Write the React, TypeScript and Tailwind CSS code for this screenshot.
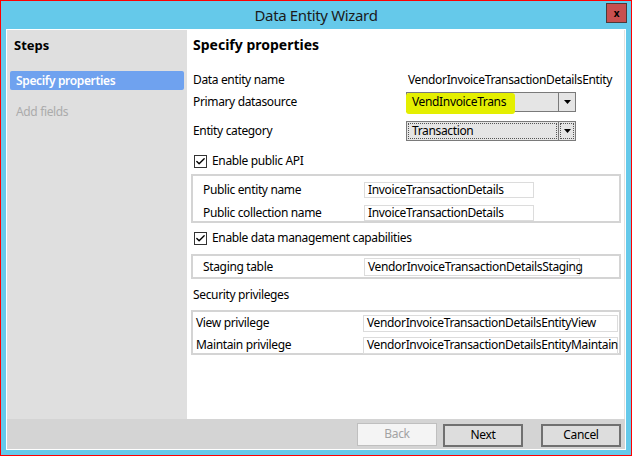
import { Check } from "lucide-react";

const font = { fontFamily: "'Noto Sans', 'Liberation Sans', sans-serif" };

function Combo({ value, focused, highlight }: { value: string; focused?: boolean; highlight?: boolean }) {
  return (
    <div className="relative flex h-[20px] w-[170px] border border-[#7a7a7a] bg-[#e5e5e5]">
      <div className="relative flex flex-1 items-center">
        {highlight && (
          <span className="absolute left-[-1px] top-[0px] h-[21px] w-[109px] rounded-[3px] bg-[#e4ef00]" />
        )}
        {focused && (
          <span className="absolute inset-[1px] border border-dotted border-[#555]" />
        )}
        <span className="relative pl-[5px] text-[12px] leading-none text-black">{value}</span>
      </div>
      <div className="relative flex w-[17px] items-center justify-center border-l border-[#7a7a7a]">
        {focused && <span className="absolute inset-[1px] border border-dotted border-[#555]" />}
        <svg width="7" height="4" viewBox="0 0 7 4" className="relative">
          <path d="M0 0h7L3.5 4z" fill="#000" />
        </svg>
      </div>
    </div>
  );
}

function CheckRow({ label }: { label: string }) {
  return (
    <div className="flex h-[18px] items-center gap-[5px] pl-[7px]">
      <span className="flex h-[13px] w-[13px] items-center justify-center border border-[#333] bg-white">
        <Check size={11} strokeWidth={3} className="text-black" />
      </span>
      <span className="text-[12px] text-black">{label}</span>
    </div>
  );
}

function Field({ value, w, h }: { value: string; w: string; h: string }) {
  return (
    <div className={`flex items-center border border-[#dcdcdc] bg-white pl-[3px] text-[12px] text-black ${w} ${h}`}>
      {value}
    </div>
  );
}

function Btn({ label, disabled }: { label: string; disabled?: boolean }) {
  return (
    <button
      className={
        disabled
          ? "h-[23px] w-[80px] border border-[#bfbfbf] bg-[#f4f4f4] text-[12px] text-[#a3a3a3]"
          : "h-[23px] w-[80px] border-2 border-[#707070] bg-[#dddddd] text-[12px] text-black"
      }
    >
      {label}
    </button>
  );
}

export default function App() {
  return (
    <div style={font} className="h-[456px] w-[632px] border border-[#ff0000] bg-[#65c9ea] tracking-[-0.35px]">
      <div className="relative flex h-[28px] items-center justify-center">
        <span className="text-[15px] text-[#1b1b1b]">Data Entity Wizard</span>
        <div className="absolute right-[4px] top-[2px] flex h-[20px] w-[21px] items-center justify-center border border-[#4d3a3a] bg-[#c75050]">
          <span className="text-[10px] font-bold leading-none text-black">x</span>
        </div>
      </div>

      <div className="ml-[5px] flex h-[421px] w-[620px] flex-col border border-white">
        <div className="flex h-[389px]">
          <aside className="w-[180px] bg-[#dfdfdf] px-[3px]">
            <p className="mt-[6px] pl-[4px] text-[13px] font-bold leading-[18px] tracking-normal text-black">Steps</p>
            <div className="mt-[17px] flex h-[19px] items-center rounded-[2px] bg-[#6fa2ef] pl-[6px] text-[12px] font-semibold text-white">
              Specify properties
            </div>
            <p className="mt-[14px] pl-[6px] text-[12px] leading-[16px] text-[#ababab]">Add fields</p>
          </aside>

          <section className="flex-1 border-r border-[#e2e2e2] bg-white text-[12px] text-black">
            <h1 className="mt-[6px] h-[18px] pl-[6px] text-[14px] font-bold leading-[18px] tracking-normal">Specify properties</h1>

            <div className="mt-[16px] flex h-[20px] items-center pl-[6px]">
              <span className="w-[215px]">Data entity name</span>
              <span>VendorInvoiceTransactionDetailsEntity</span>
            </div>
            <div className="mt-[2px] flex h-[20px] items-center pl-[6px]">
              <span className="w-[213px]">Primary datasource</span>
              <Combo value="VendInvoiceTrans" highlight />
            </div>
            <div className="mt-[9px] flex h-[20px] items-center pl-[6px]">
              <span className="w-[213px]">Entity category</span>
              <Combo value="Transaction" focused />
            </div>

            <div className="mt-[11px]">
              <CheckRow label="Enable public API" />
            </div>
            <div className="ml-[4px] mt-[4px] flex h-[49px] w-[430px] flex-col gap-[5px] border-2 border-[#d4d4d4] pl-[10px] pt-[5px]">
              <div className="flex items-center">
                <span className="w-[161px]">Public entity name</span>
                <Field value="InvoiceTransactionDetails" w="w-[170px]" h="h-[16px]" />
              </div>
              <div className="flex items-center">
                <span className="w-[161px]">Public collection name</span>
                <Field value="InvoiceTransactionDetails" w="w-[170px]" h="h-[16px]" />
              </div>
            </div>

            <div className="mt-[6px]">
              <CheckRow label="Enable data management capabilities" />
            </div>
            <div className="ml-[4px] mt-[7px] flex h-[25px] w-[430px] items-center border-2 border-[#d4d4d4] pl-[10px]">
              <span className="w-[161px]">Staging table</span>
              <Field value="VendorInvoiceTransactionDetailsStaging" w="w-[216px]" h="h-[18px]" />
            </div>

            <p className="mt-[7px] flex h-[18px] items-center pl-[6px]">Security privileges</p>
            <div className="ml-[4px] mt-[6px] flex h-[45px] w-[430px] flex-col gap-[4px] border-2 border-[#d4d4d4] pl-[3px] pt-[2px]">
              <div className="flex items-center">
                <span className="w-[167px]">View privilege</span>
                <Field value="VendorInvoiceTransactionDetailsEntityView" w="w-[255px]" h="h-[17px]" />
              </div>
              <div className="flex items-center">
                <span className="w-[167px]">Maintain privilege</span>
                <Field value="VendorInvoiceTransactionDetailsEntityMaintain" w="w-[255px]" h="h-[17px]" />
              </div>
            </div>
          </section>
        </div>

        <div className="flex h-[30px] items-center justify-end bg-[#d4d4d4] pr-[4px]">
          <Btn label="Back" disabled />
          <div className="ml-[6px]">
            <Btn label="Next" />
          </div>
          <div className="ml-[18px]">
            <Btn label="Cancel" />
          </div>
        </div>
      </div>
    </div>
  );
}
